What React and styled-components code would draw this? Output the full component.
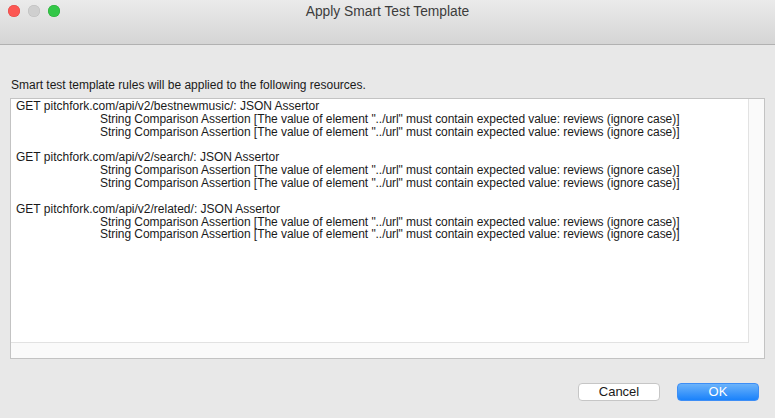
import styled, { createGlobalStyle } from 'styled-components';

const GlobalStyle = createGlobalStyle`
  html, body {
    margin: 0;
    padding: 0;
    background: #e8e8e8;
  }
  body {
    font-family: "Liberation Sans", Arial, sans-serif;
    font-size: 12px;
    color: #1a1a1a;
  }
`;

const Window = styled.div`
  width: 775px;
  height: 418px;
  display: flex;
  flex-direction: column;
  background: #e8e8e8;
  overflow: hidden;
`;

const TitleBar = styled.div`
  height: 44px;
  flex-shrink: 0;
  position: relative;
  display: flex;
  justify-content: center;
  background: linear-gradient(#ebebeb, #d5d5d5);
  border-bottom: 1px solid #b1b1b1;
`;

const Lights = styled.div`
  position: absolute;
  left: 8px;
  top: 5px;
  display: flex;
  gap: 8px;
`;

const Light = styled.span`
  width: 12px;
  height: 12px;
  border-radius: 50%;
  background: ${(p) => p.color};
  box-shadow: inset 0 0 0 0.5px ${(p) => p.edge};
`;

const Title = styled.div`
  margin-top: 3px;
  font-size: 13.8px;
  color: #3c3c3c;
  line-height: 17px;
`;

const Body = styled.div`
  flex: 1;
  display: flex;
  flex-direction: column;
  padding: 33px 10px 0 10px;
`;

const Label = styled.div`
  padding-left: 1px;
  line-height: 15px;
  margin-bottom: 5px;
`;

const ScrollPane = styled.div`
  height: 259px;
  border: 1px solid #c3c3c3;
  background: #fafafa;
  display: grid;
  grid-template-columns: 1fr 15px;
  grid-template-rows: 1fr 15px;
`;

const Viewport = styled.div`
  background: #fff;
  border-right: 1px solid #e2e2e2;
  border-bottom: 1px solid #e2e2e2;
  padding: 1px 5px;
`;

const Group = styled.div`
  margin-bottom: 13px;
`;

const Line = styled.div`
  line-height: 12.8px;
  white-space: nowrap;
  letter-spacing: ${(p) => (p.indent ? '-0.055px' : '0')};
  padding-left: ${(p) => (p.indent ? '84px' : '0')};
`;

const Footer = styled.div`
  display: flex;
  justify-content: flex-end;
  gap: 17px;
  padding: 24px 6px 0 0;
`;

const Button = styled.button`
  width: 82px;
  height: 18px;
  border-radius: 4px;
  font-family: "Liberation Sans", Arial, sans-serif;
  font-size: 13px;
  line-height: 16px;
  padding: 0;
  border: 1px solid ${(p) => (p.primary ? '#3d8ef6' : '#c6c6c6')};
  background: ${(p) => (p.primary ? 'linear-gradient(#6cb3fa, #1a82fb)' : '#ffffff')};
  color: ${(p) => (p.primary ? '#ffffff' : '#1a1a1a')};
`;

const resources = [
  'bestnewmusic',
  'search',
  'related',
];

const assertion =
  'String Comparison Assertion [The value of element "../url" must contain expected value: reviews (ignore case)]';

export default function App() {
  return (
    <>
      <GlobalStyle />
      <Window>
        <TitleBar>
          <Lights>
            <Light color="#fc5753" edge="#df4744" />
            <Light color="#cfcfcf" edge="#bcbcbc" />
            <Light color="#33c748" edge="#27aa35" />
          </Lights>
          <Title>Apply Smart Test Template</Title>
        </TitleBar>
        <Body>
          <Label>Smart test template rules will be applied to the following resources.</Label>
          <ScrollPane>
            <Viewport>
              {resources.map((r) => (
                <Group key={r}>
                  <Line>GET pitchfork.com/api/v2/{r}/: JSON Assertor</Line>
                  <Line indent>{assertion}</Line>
                  <Line indent>{assertion}</Line>
                </Group>
              ))}
            </Viewport>
            <div />
            <div />
            <div />
          </ScrollPane>
          <Footer>
            <Button>Cancel</Button>
            <Button primary>OK</Button>
          </Footer>
        </Body>
      </Window>
    </>
  );
}
